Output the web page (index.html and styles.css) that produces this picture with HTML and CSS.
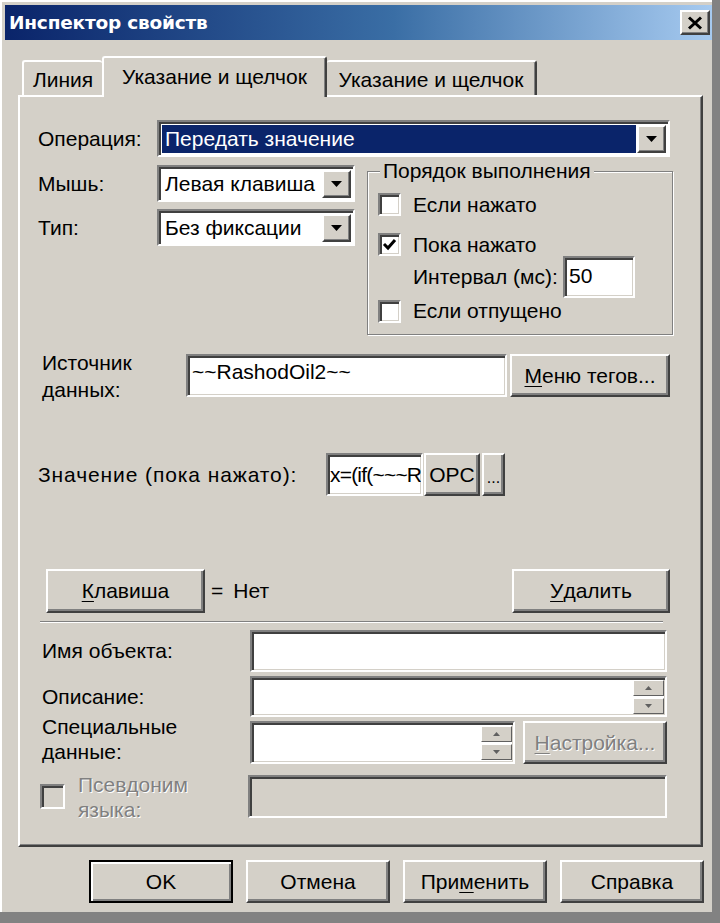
FILE: index.html
```html
<!DOCTYPE html>
<html lang="ru">
<head>
<meta charset="utf-8">
<title>Инспектор свойств</title>
<link rel="stylesheet" href="styles.css">
</head>
<body>
<div class="window">
  <div class="titlebar">
    <span class="title">Инспектор свойств</span>
    <button class="close-btn" type="button" aria-label="Закрыть">
      <svg width="16" height="14" viewBox="0 0 16 14"><path d="M2 1.5 L14 12.5 M14 1.5 L2 12.5" stroke="#000" stroke-width="3" fill="none"/></svg>
    </button>
  </div>

  <div class="tabs">
    <div class="tab tab-line">Линия</div>
    <div class="tab tab-active">Указание и щелчок</div>
    <div class="tab tab-third">Указание и щелчок</div>
  </div>

  <div class="panel">
    <div class="row row-op">
      <span class="label label-op">Операция:</span>
      <div class="combo combo-op">
        <span class="combo-value selected">Передать значение</span>
        <span class="drop-btn"><svg width="11" height="6" viewBox="0 0 11 6"><polygon points="0,0 11,0 5.5,6" fill="#000"/></svg></span>
      </div>
    </div>

    <div class="row row-mid">
      <div class="mid-left">
        <div class="mid-line">
          <span class="label label-mid">Мышь:</span>
          <div class="combo combo-small">
            <span class="combo-value">Левая клавиша</span>
            <span class="drop-btn"><svg width="11" height="6" viewBox="0 0 11 6"><polygon points="0,0 11,0 5.5,6" fill="#000"/></svg></span>
          </div>
        </div>
        <div class="mid-line">
          <span class="label label-mid">Тип:</span>
          <div class="combo combo-small">
            <span class="combo-value">Без фиксации</span>
            <span class="drop-btn"><svg width="11" height="6" viewBox="0 0 11 6"><polygon points="0,0 11,0 5.5,6" fill="#000"/></svg></span>
          </div>
        </div>
      </div>

      <fieldset class="group">
        <legend class="group-title">Порядок выполнения</legend>
        <div class="check-row first">
          <span class="checkbox"></span>
          <span class="check-text">Если нажато</span>
        </div>
        <div class="check-row second">
          <span class="checkbox"><svg width="15" height="13" viewBox="0 0 15 13"><path d="M2 6 L6 10 L13 2" stroke="#000" stroke-width="3" fill="none"/></svg></span>
          <span class="check-text">Пока нажато</span>
        </div>
        <div class="interval-row">
          <span class="interval-label">Интервал (мс):</span>
          <span class="field field-interval">50</span>
        </div>
        <div class="check-row third">
          <span class="checkbox"></span>
          <span class="check-text">Если отпущено</span>
        </div>
      </fieldset>
    </div>

    <div class="row row-source">
      <span class="label label-source">Источник<br>данных:</span>
      <span class="field field-source">~~RashodOil2~~</span>
      <button class="btn btn-tags" type="button"><u>М</u>еню тегов...</button>
    </div>

    <div class="row row-value">
      <span class="label label-value">Значение (пока нажато):</span>
      <span class="field field-value">x=(if(~~~R</span>
      <button class="btn btn-opc" type="button">OPC</button>
      <button class="btn btn-dots" type="button">...</button>
    </div>

    <div class="row row-key">
      <button class="btn btn-key" type="button"><u>К</u>лавиша</button>
      <span class="key-eq">=</span>
      <span class="key-val">Нет</span>
      <button class="btn btn-delete" type="button"><u>У</u>далить</button>
    </div>

    <div class="separator"></div>

    <div class="row row-name">
      <span class="label label-prop">Имя объекта:</span>
      <span class="field field-wide"></span>
    </div>

    <div class="row row-desc">
      <span class="label label-prop">Описание:</span>
      <span class="field field-wide field-spin">
        <span class="spin">
          <span class="spin-btn"><svg width="7" height="4" viewBox="0 0 7 4"><polygon points="0,4 7,4 3.5,0" fill="#606060"/></svg></span>
          <span class="spin-btn"><svg width="7" height="4" viewBox="0 0 7 4"><polygon points="0,0 7,0 3.5,4" fill="#606060"/></svg></span>
        </span>
      </span>
    </div>

    <div class="row row-special">
      <span class="label label-prop label-two">Специальные<br>данные:</span>
      <span class="field field-special field-spin">
        <span class="spin">
          <span class="spin-btn"><svg width="7" height="4" viewBox="0 0 7 4"><polygon points="0,4 7,4 3.5,0" fill="#606060"/></svg></span>
          <span class="spin-btn"><svg width="7" height="4" viewBox="0 0 7 4"><polygon points="0,0 7,0 3.5,4" fill="#606060"/></svg></span>
        </span>
      </span>
      <button class="btn btn-setup disabled" type="button"><u>Н</u>астройка...</button>
    </div>

    <div class="row row-alias">
      <span class="checkbox checkbox-disabled"></span>
      <span class="label label-alias disabled-text">Псевдоним<br>языка:</span>
      <span class="field field-wide field-disabled"></span>
    </div>
  </div>

  <div class="footer">
    <button class="btn btn-foot btn-default" type="button">OK</button>
    <button class="btn btn-foot" type="button">Отмена</button>
    <button class="btn btn-foot" type="button">При<u>м</u>енить</button>
    <button class="btn btn-foot" type="button">Справка</button>
  </div>
</div>
</body>
</html>
```

FILE: styles.css
```css
* { box-sizing: border-box; }

html, body {
  margin: 0;
  padding: 0;
  background: #d4d0c8;
}

body {
  font-family: "Liberation Sans", Arial, sans-serif;
  font-size: 21px;
  color: #000;
}

button {
  font: inherit;
  color: inherit;
  padding: 0;
  margin: 0;
}

/* outer window frame */
.window {
  width: 720px;
  height: 923px;
  background: #d4d0c8;
  border-right: 8px solid #828282;
  border-bottom: 11px solid #828282;
  box-shadow: inset 2px 2px 0 #ffffff;
  display: flex;
  flex-direction: column;
  overflow: hidden;
}

/* caption bar */
.titlebar {
  margin: 5px 0 0 5px;
  height: 35px;
  background: linear-gradient(to right, #0a246a 0%, #3a6ea5 55%, #a6caf0 100%);
  display: flex;
  align-items: center;
  justify-content: space-between;
  padding: 0 2px 0 4px;
}

.title {
  font-family: "DejaVu Sans", Verdana, sans-serif;
  font-weight: bold;
  font-size: 18.5px;
  color: #fff;
  letter-spacing: -0.2px;
}

.close-btn {
  width: 30px;
  height: 25px;
  background: #d4d0c8;
  border: 2px solid;
  border-color: #ffffff #404040 #404040 #ffffff;
  box-shadow: inset -1px -1px 0 #808080;
  display: flex;
  align-items: center;
  justify-content: center;
}

/* tab strip */
.tabs {
  display: flex;
  align-items: flex-end;
  height: 38px;
  margin: 17px 0 0 22px;
}

.tab {
  height: 35px;
  display: flex;
  align-items: center;
  justify-content: center;
  background: #d4d0c8;
  border-top: 2px solid #ffffff;
  border-left: 2px solid #ffffff;
  border-right: 2px solid #404040;
  border-radius: 3px 3px 0 0;
  box-shadow: inset -1px 0 0 #808080;
  padding-top: 2px;
}

.tab-line {
  width: 80px;
  border-right: none;
  box-shadow: none;
}

.tab-active {
  width: 225px;
  height: 41px;
  margin-bottom: -2px;
  position: relative;
  z-index: 1;
  padding-bottom: 4px;
}

.tab-third {
  width: 210px;
  border-left: none;
}

/* tab page */
.panel {
  margin-left: 18px;
  width: 685px;
  height: 752px;
  border: 2px solid;
  border-color: #ffffff #404040 #404040 #ffffff;
  box-shadow: inset -1px -1px 0 #808080;
  display: flex;
  flex-direction: column;
}

.row {
  display: flex;
  align-items: center;
  margin-left: 18px;
}

.label {
  flex: none;
  line-height: 26px;
}

/* sunken edit field */
.field {
  flex: none;
  background: #fff;
  border: 2px solid;
  border-color: #808080 #ffffff #ffffff #808080;
  box-shadow: inset 2px 2px 0 #404040, inset -1px -1px 0 #d4d0c8;
  display: flex;
  align-items: center;
  padding-left: 4px;
  white-space: nowrap;
  overflow: hidden;
}

/* raised push button */
.btn {
  flex: none;
  background: #d4d0c8;
  border: 2px solid;
  border-color: #ffffff #404040 #404040 #ffffff;
  box-shadow: inset -2px -2px 0 #808080;
  display: flex;
  align-items: center;
  justify-content: center;
  white-space: nowrap;
}

.btn u { text-decoration-thickness: 1px; text-underline-offset: 3px; }

/* combo boxes */
.combo {
  flex: none;
  background: #fff;
  border: 2px solid;
  border-color: #808080 #ffffff #ffffff #808080;
  box-shadow: inset 2px 2px 0 #404040;
  display: flex;
  align-items: stretch;
  padding: 3px 2px 2px 3px;
  height: 37px;
}

.combo-value {
  flex: 1;
  display: flex;
  align-items: center;
  padding-left: 3px;
  white-space: nowrap;
  overflow: hidden;
}

.combo-value.selected {
  background: #0a246a;
  color: #fff;
  margin-right: 1px;
}

.drop-btn {
  width: 29px;
  flex: none;
  background: #d4d0c8;
  border: 2px solid;
  border-color: #ffffff #404040 #404040 #ffffff;
  box-shadow: inset -1px -1px 0 #808080;
  display: flex;
  align-items: center;
  justify-content: center;
}

/* operation row */
.row-op { margin-top: 23px; }
.label-op { width: 119px; }
.combo-op { width: 513px; }

/* mouse / type + execution order group */
.row-mid {
  margin-top: 8px;
  align-items: flex-start;
}

.mid-left {
  width: 317px;
  display: flex;
  flex-direction: column;
  gap: 7px;
}

.mid-line {
  display: flex;
  align-items: center;
}

.label-mid { width: 119px; }
.combo-small { width: 198px; }

.group {
  margin: -4px 0 0 12px;
  width: 306px;
  height: 174px;
  padding: 12px 0 0 10px;
  border: 1px solid #808080;
  box-shadow: inset 1px 1px 0 #ffffff, 1px 1px 0 #ffffff;
  min-inline-size: 0;
}

.group-title {
  padding: 0 3px;
  margin-left: 2px;
  line-height: 20px;
  background: #d4d0c8;
}

.check-row {
  display: flex;
  align-items: center;
  height: 23px;
}

.check-row.second { margin-top: 17px; }
.check-row.third { margin-top: 1px; height: 24px; }

.checkbox {
  width: 23px;
  height: 23px;
  flex: none;
  background: #fff;
  border: 2px solid;
  border-color: #808080 #ffffff #ffffff #808080;
  box-shadow: inset 2px 2px 0 #404040, inset -1px -1px 0 #d4d0c8;
  display: flex;
  align-items: center;
  justify-content: center;
  margin-right: 12px;
}

.interval-row {
  display: flex;
  align-items: center;
  height: 42px;
  padding-left: 35px;
}

.interval-label {
  width: 150px;
  white-space: nowrap;
}

.field-interval {
  width: 72px;
  height: 42px;
  align-items: flex-start;
  padding-top: 6px;
}

/* data source */
.row-source { margin-top: 19px; height: 43px; }
.label-source { width: 148px; padding-left: 4px; line-height: 27px; }
.field-source { width: 321px; height: 43px; align-items: flex-start; padding-top: 4px; }
.btn-tags { width: 160px; height: 43px; margin-left: 3px; }

/* value while pressed */
.row-value { margin-top: 56px; height: 43px; }
.label-value { width: 288px; letter-spacing: 0.9px; }
.field-value { width: 97px; height: 43px; padding-left: 2px; letter-spacing: -0.8px; }
.btn-opc { width: 56px; height: 43px; margin-left: 1px; }
.btn-dots { width: 23px; height: 43px; margin-left: 2px; font-size: 16px; padding-top: 6px; }

/* key assignment */
.row-key { margin-top: 73px; width: 632px; height: 44px; }
.btn-key { width: 159px; height: 44px; margin-left: 8px; }
.key-eq { margin-left: 6px; }
.key-val { margin-left: 10px; }
.btn-delete { width: 158px; height: 44px; margin-left: auto; }

.separator {
  margin: 8px 0 0 20px;
  width: 623px;
  height: 2px;
  border-top: 1px solid #808080;
  border-bottom: 1px solid #ffffff;
}

/* object properties */
.label-prop { width: 212px; padding-left: 4px; }

.row-name { margin-top: 7px; height: 42px; }
.field-wide { width: 417px; height: 42px; }

.row-desc { margin-top: 4px; height: 41px; }
.row-desc .field-wide { height: 41px; }

.field-spin {
  justify-content: flex-end;
  padding: 0 1px 0 0;
}

.spin {
  display: flex;
  flex-direction: column;
  gap: 2px;
  width: 31px;
}

.spin-btn {
  height: 16px;
  background: #d4d0c8;
  border: 1px solid;
  border-color: #ffffff #606060 #606060 #ffffff;
  display: flex;
  align-items: center;
  justify-content: center;
}

.row-special { margin-top: 4px; height: 43px; }
.label-two { line-height: 25px; margin-top: -8px; }
.field-special { width: 265px; height: 43px; }
.btn-setup { width: 144px; height: 43px; margin-left: 8px; }

.disabled,
.disabled-text {
  color: #808080;
  text-shadow: 1px 1px 0 #ffffff;
}

.row-alias { margin-top: 11px; height: 43px; }

.checkbox-disabled {
  width: 25px;
  height: 25px;
  margin-left: 2px;
  background: #d4d0c8;
}

.label-alias { width: 170px; margin-left: 1px; line-height: 25px; }

.field-disabled {
  background: #d4d0c8;
  width: 419px;
  height: 43px;
}

/* dialog buttons */
.footer {
  display: flex;
  gap: 13px;
  margin: 13px 0 0 89px;
}

.btn-foot {
  width: 144px;
  height: 43px;
}

.btn-default {
  border: 2px solid #000;
  box-shadow: inset 2px 2px 0 #ffffff, inset -2px -2px 0 #808080;
}
```
